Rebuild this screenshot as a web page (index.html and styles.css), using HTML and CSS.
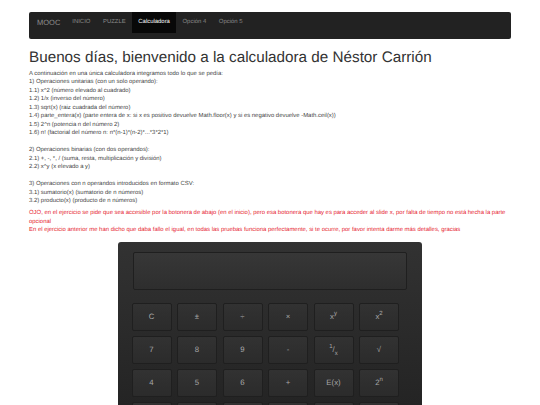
FILE: index.html
```html
<!DOCTYPE html>
<html lang="es">
<head>
<meta charset="utf-8">
<title>Calculadora</title>
<link rel="stylesheet" href="styles.css">
</head>
<body>
<nav class="navbar">
  <span class="brand">MOOC</span>
  <a class="nav-link">INICIO</a>
  <a class="nav-link">PUZZLE</a>
  <a class="nav-link active">Calculadora</a>
  <a class="nav-link">Opción 4</a>
  <a class="nav-link">Opción 5</a>
</nav>
<h1>Buenos días, bienvenido a la calculadora de Néstor Carrión</h1>
<p class="intro">A continuación en una única calculadora integramos todo lo que se pedía:<br>
1) Operaciones unitarias (con un solo operando):<br>
1.1) x^2 (número elevado al cuadrado)<br>
1.2) 1/x (inverso del número)<br>
1.3) sqrt(x) (raiz cuadrada del número)<br>
1.4) parte_entera(x) (parte entera de x: si x es positivo devuelve Math.floor(x) y si es negativo devuelve -Math.ceil(x))<br>
1.5) 2^n (potencia n del número 2)<br>
1.6) n! (factorial del número n: n*(n-1)*(n-2)*...*3*2*1)<br>
<br>
2) Operaciones binarias (con dos operandos):<br>
2.1) +, -, *, / (suma, resta, multiplicación y división)<br>
2.2) x^y (x elevado a y)<br>
<br>
3) Operaciones con n operandos introducidos en formato CSV:<br>
3.1) sumatorio(x) (sumatorio de n números)<br>
3.2) producto(x) (producto de n números)</p>
<p class="warning">OJO, en el ejercicio se pide que sea accesible por la botonera de abajo (en el inicio), pero esa botonera que hay es para acceder al slide x, por falta de tiempo no está hecha la parte opcional<br>
En el ejercicio anterior me han dicho que daba fallo el igual, en todas las pruebas funciona perfectamente, si te ocurre, por favor intenta darme más detalles, gracias</p>
<section class="calc">
  <div class="display"></div>
  <div class="keys">
    <button class="key">C</button><button class="key">±</button><button class="key">÷</button><button class="key">×</button><button class="key">x<sup>y</sup></button><button class="key">x<sup>2</sup></button>
    <button class="key">7</button><button class="key">8</button><button class="key">9</button><button class="key">-</button><button class="key"><sup>1</sup>/<sub>x</sub></button><button class="key">√</button>
    <button class="key">4</button><button class="key">5</button><button class="key">6</button><button class="key">+</button><button class="key">E(x)</button><button class="key">2<sup>n</sup></button>
    <button class="key"></button><button class="key"></button><button class="key"></button><button class="key"></button><button class="key"></button><button class="key"></button>
  </div>
</section>
</body>
</html>
```
FILE: styles.css
```css
html, body { height: 405px; overflow: hidden; }
body {
  margin: 0;
  padding: 12px 29.5px 0 29px;
  box-sizing: border-box;
  background: #fff;
  color: #444;
  font-family: "Liberation Sans", Arial, sans-serif;
  font-size: 5.93px;
  line-height: 8.48px;
  text-rendering: geometricPrecision;
}
.navbar {
  display: flex;
  align-items: flex-start;
  height: 27px;
  background: #222;
  border-radius: 2px;
  box-sizing: border-box;
  padding-left: 8px;
}
.brand { color: #8f8f8f; font-size: 7.5px; line-height: 21px; margin-right: 6px; width: 23px; }
.nav-link { color: #8a8a8a; font-size: 5.93px; line-height: 21px; padding: 0 6.3px; }
.nav-link.active { background: #080808; color: #fff; }
h1 {
  margin: 9.5px 0 0;
  font-size: 15.26px;
  line-height: 17px;
  font-weight: 400;
  color: #333;
}
.intro { margin: 4.5px 0 0; }
.warning { margin: 3.5px 0 0; color: #e62430; }
.calc {
  box-sizing: border-box;
  width: 304px;
  height: 163px;
  margin: 7px 0 0 89px;
  padding: 10px 13.5px 0;
  background: #2c2c2c;
  background-image: linear-gradient(#323232, #242424);
  border-radius: 3px 3px 0 0;
  overflow: hidden;
}
.display {
  height: 38px;
  margin: 0 1.5px;
  box-sizing: border-box;
  background: #333;
  background-image: linear-gradient(#373737, #2e2e2e);
  border: 1px solid #1f1f1f;
  border-radius: 2px;
}
.keys {
  display: grid;
  grid-template-columns: repeat(6, 40px);
  grid-auto-rows: 28.5px;
  column-gap: 5.5px;
  row-gap: 4.5px;
  margin-top: 13px;
}
.key {
  padding: 0;
  font: 7.8px/1 "Liberation Sans", Arial, sans-serif;
  text-rendering: geometricPrecision;
  color: #a8a8a8;
  background: #2d2d2d;
  background-image: linear-gradient(#323232, #2b2b2b);
  border: 1px solid #1f1f1f;
  border-radius: 2px;
}
.key sup, .key sub { font-size: 6px; line-height: 0; }
```
